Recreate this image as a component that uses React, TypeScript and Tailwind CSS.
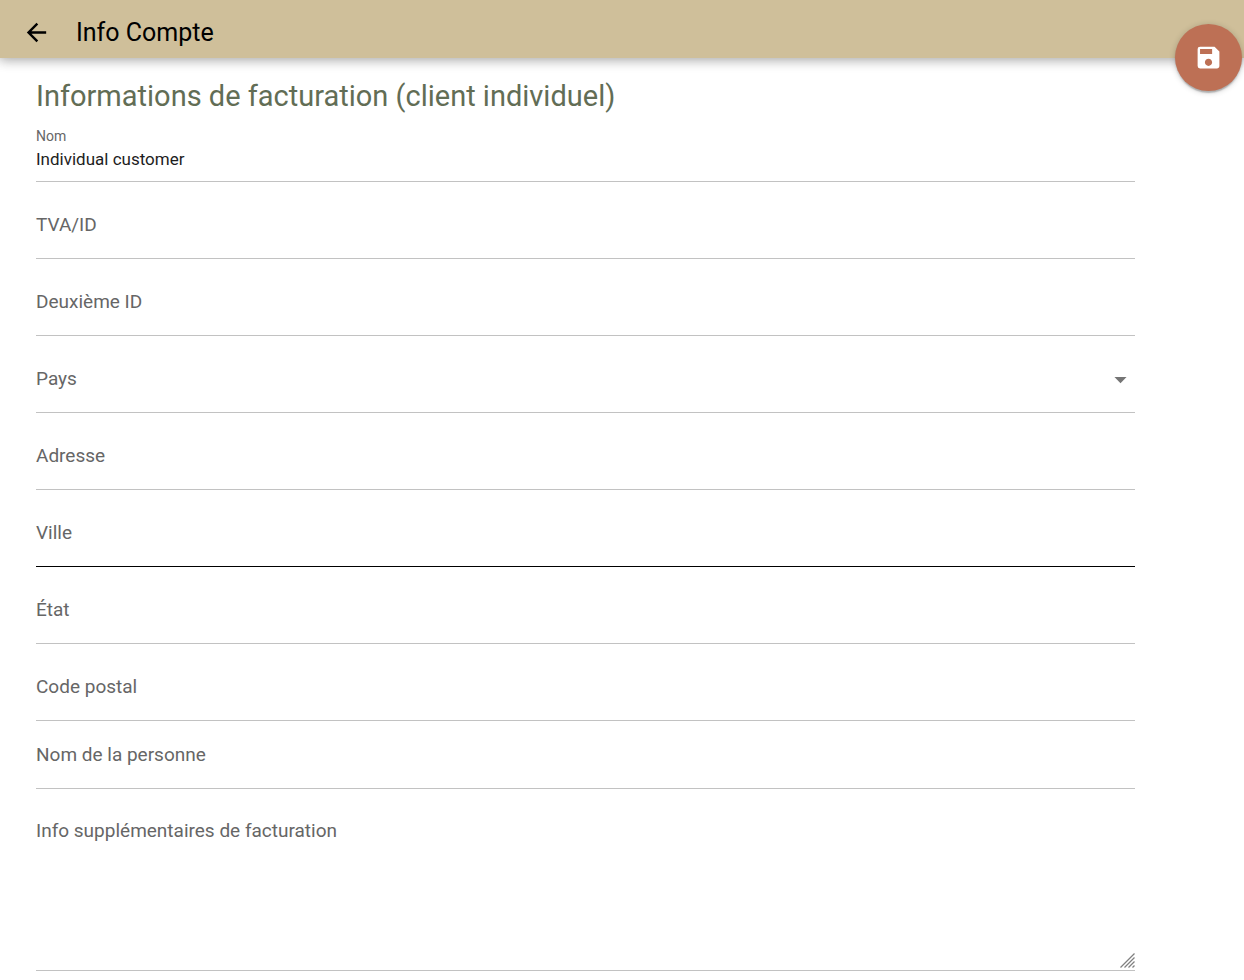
import { useState } from "react";
import { clsx } from "clsx";
import { MdArrowBack, MdArrowDropDown, MdSave } from "react-icons/md";

interface FieldDef {
  id: string;
  label: string;
  kind?: "select";
  active?: boolean;
}

const FIELDS: FieldDef[] = [
  { id: "vat", label: "TVA/ID" },
  { id: "secondId", label: "Deuxième ID" },
  { id: "country", label: "Pays", kind: "select" },
  { id: "address", label: "Adresse" },
  { id: "city", label: "Ville", active: true },
  { id: "state", label: "État" },
  { id: "zip", label: "Code postal" },
];

const COUNTRIES = ["France", "Belgique", "Suisse", "Luxembourg"];

const labelClass =
  "pointer-events-none z-10 col-start-1 row-start-1 self-center text-[19px] leading-6 text-[#666666]";
const controlClass =
  "col-start-1 row-start-1 h-full w-full appearance-none bg-transparent text-[17px] text-[#1d1d1d] outline-none";

function Field({ id, label, kind, active }: FieldDef) {
  const [value, setValue] = useState("");

  return (
    <div
      className={clsx(
        "grid h-[68px] border-b pt-px hover:border-black",
        active ? "border-black" : "border-[#c2c2c2]"
      )}
    >
      {!value && (
        <label htmlFor={id} className={labelClass}>
          {label}
        </label>
      )}
      {kind === "select" ? (
        <>
          <select
            id={id}
            aria-label={label}
            className={controlClass}
            value={value}
            onChange={(e) => setValue(e.target.value)}
          >
            <option value=""></option>
            {COUNTRIES.map((c) => (
              <option key={c}>{c}</option>
            ))}
          </select>
          <MdArrowDropDown className="pointer-events-none col-start-1 row-start-1 size-[29px] self-center justify-self-end text-[#757575]" />
        </>
      ) : (
        <input
          id={id}
          type="text"
          aria-label={label}
          className={controlClass}
          value={value}
          onChange={(e) => setValue(e.target.value)}
        />
      )}
    </div>
  );
}

function ResizeGrip() {
  return (
    <svg
      viewBox="0 0 15 15"
      className="pointer-events-none col-start-1 row-start-1 mb-0.5 size-[15px] self-end justify-self-end"
      stroke="#808080"
      strokeWidth="1.3"
      aria-hidden="true"
    >
      <path d="M0.5 14.5 14.5 0.5M4.5 14.5 14.5 4.5M8.5 14.5 14.5 8.5M12.5 14.5 14.5 12.5" />
    </svg>
  );
}

export default function App() {
  const [name, setName] = useState("Individual customer");
  const [info, setInfo] = useState("");

  return (
    <div className="min-h-screen bg-white font-[Roboto,sans-serif]">
      <header className="flex h-[58px] items-center bg-[#cfbf9a] pt-[7px] pl-[22px] text-black shadow-[0_0_12px_2px_rgba(0,0,0,0.2),0_0_12px_rgba(0,0,0,0.24)]">
        <button type="button" aria-label="Retour">
          <MdArrowBack className="size-[29px]" />
        </button>
        <h1 className="pl-[25px] text-[25px] leading-8">Info Compte</h1>
      </header>

      <button
        type="button"
        aria-label="Enregistrer"
        className="fixed top-6 right-[2px] flex size-[67px] items-center justify-center rounded-full bg-[#bd7055] text-white shadow-[0_1px_6px_rgba(0,0,0,0.2),0_2px_2px_rgba(0,0,0,0.14),0_4px_1px_-2px_rgba(0,0,0,0.12)]"
      >
        <MdSave className="size-[29px]" />
      </button>

      <main className="pt-5 pr-[109px] pb-2 pl-9">
        <h2 className="text-[29px] leading-9 text-[#626d55]">
          Informations de facturation (client individuel)
        </h2>

        <form className="flex flex-col" onSubmit={(e) => e.preventDefault()}>
          <div className="flex h-[68px] flex-col border-b border-[#c2c2c2] pt-3">
            <label htmlFor="name" className="text-sm leading-5 text-[#666666]">
              Nom
            </label>
            <input
              id="name"
              type="text"
              className="h-[26px] w-full bg-transparent text-[17px] text-[#1d1d1d] outline-none"
              value={name}
              onChange={(e) => setName(e.target.value)}
            />
          </div>

          <div className="flex flex-col gap-[9px] pt-[9px]">
            {FIELDS.map((f) => (
              <Field key={f.id} {...f} />
            ))}
          </div>

          <Field id="person" label="Nom de la personne" />

          <div className="mt-[9px] grid h-[173px] border-b border-[#c2c2c2]">
            {!info && (
              <label
                htmlFor="info"
                className="pointer-events-none z-10 col-start-1 row-start-1 self-start pt-[21px] text-[19px] leading-6 text-[#666666]"
              >
                Info supplémentaires de facturation
              </label>
            )}
            <textarea
              id="info"
              aria-label="Info supplémentaires de facturation"
              className="col-start-1 row-start-1 h-full w-full resize-none bg-transparent pt-5 text-[17px] text-[#1d1d1d] outline-none"
              value={info}
              onChange={(e) => setInfo(e.target.value)}
            />
            <ResizeGrip />
          </div>
        </form>
      </main>
    </div>
  );
}
